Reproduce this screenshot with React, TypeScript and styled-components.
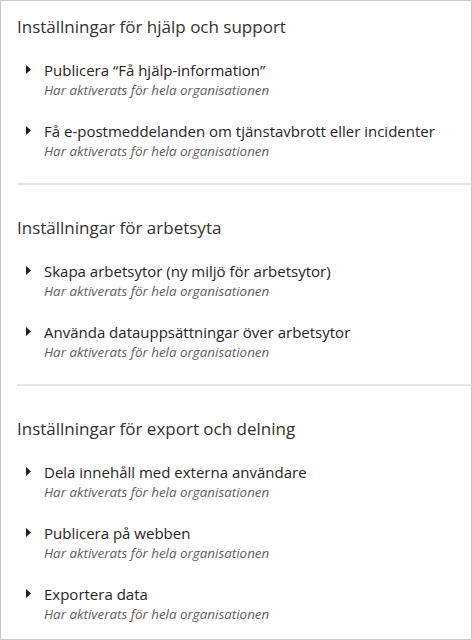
import React from "react";
import styled, { createGlobalStyle } from "styled-components";

const Global = createGlobalStyle`
  html, body { margin: 0; padding: 0; background: #ffffff; }
  body { font-family: "Open Sans", "Noto Sans", sans-serif; }
  * { box-sizing: border-box; }
`;

const Panel = styled.div`
  width: 472px;
  height: 640px;
  border: 1px solid #c8c8c8;
  background: #ffffff;
  padding-top: 14px;
  overflow: hidden;
`;

const Section = styled.section`
  margin-left: 16px;
  padding-bottom: 12px;
  & + & {
    border-top: 2px solid #e6e6e6;
    padding-top: 31px;
  }
`;

const Heading = styled.h2`
  margin: 0 0 10px;
  font-size: 17px;
  line-height: 24px;
  font-weight: 400;
  color: #323130;
`;

const List = styled.ul`
  list-style: none;
  margin: 0;
  padding: 0 0 0 9px;
`;

const Item = styled.li`
  display: grid;
  grid-template-columns: 18px 1fr;
  padding: 11px 0 11px;
`;

const Caret = styled.svg`
  width: 5px;
  height: 9px;
  margin-top: 5px;
  display: block;
`;

const Texts = styled.div`
  display: flex;
  flex-direction: column;
`;

const Title = styled.div`
  font-size: 15px;
  line-height: 20px;
  color: #252423;
`;

const Sub = styled.div`
  margin-top: 2px;
  font-size: 13.4px;
  line-height: 17px;
  font-style: italic;
  color: #605e5c;
`;

const STATUS = "Har aktiverats för hela organisationen";

const sections = [
  {
    heading: "Inställningar för hjälp och support",
    items: [
      "Publicera \u201cFå hjälp-information\u201d",
      "Få e-postmeddelanden om tjänstavbrott eller incidenter",
    ],
  },
  {
    heading: "Inställningar för arbetsyta",
    items: [
      "Skapa arbetsytor (ny miljö för arbetsytor)",
      "Använda datauppsättningar över arbetsytor",
    ],
  },
  {
    heading: "Inställningar för export och delning",
    items: [
      "Dela innehåll med externa användare",
      "Publicera på webben",
      "Exportera data",
    ],
  },
];

export default function App() {
  return (
    <>
      <Global />
      <Panel>
        {sections.map((s) => (
          <Section key={s.heading}>
            <Heading>{s.heading}</Heading>
            <List>
              {s.items.map((t) => (
                <Item key={t}>
                  <Caret viewBox="0 0 5 9" aria-hidden="true">
                    <polygon points="0,0 5,4.5 0,9" fill="#201f1e" />
                  </Caret>
                  <Texts>
                    <Title>{t}</Title>
                    <Sub>{STATUS}</Sub>
                  </Texts>
                </Item>
              ))}
            </List>
          </Section>
        ))}
      </Panel>
    </>
  );
}
